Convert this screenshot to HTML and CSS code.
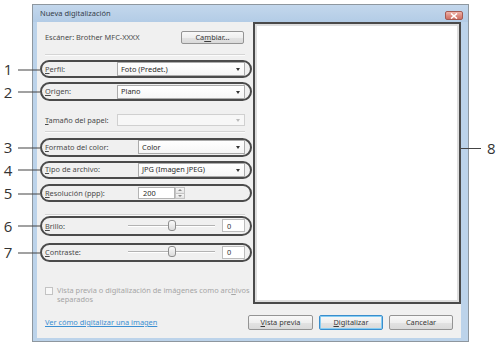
FILE: index.html
```html
<!DOCTYPE html>
<html lang="es">
<head>
<meta charset="utf-8">
<title>Nueva digitalización</title>
<link rel="stylesheet" href="styles.css">
</head>
<body>
<div class="window">
  <div class="titlebar">
    <span class="title">Nueva digitalización</span>
    <span class="close"><svg width="8" height="6" viewBox="0 0 8 6"><path d="M1 0.5 L7 5.5 M7 0.5 L1 5.5" stroke="#fff" stroke-width="1.6" fill="none"/></svg></span>
  </div>
  <div class="client">
    <div class="main">
      <div class="form">
        <div class="scanner"><span>Escáner: Brother MFC-XXXX</span><div class="btn btn-cambiar">Ca<u>m</u>biar...</div></div>
        <div class="sep sep1"></div>
        <div class="row r1"><span class="num">1</span><span class="lab lab-a"><u>P</u>erfil:</span><div class="combo wide">Foto (Predet.)</div></div>
        <div class="row r2"><span class="num">2</span><span class="lab lab-a"><u>O</u>rigen:</span><div class="combo wide">Plano</div></div>
        <div class="row plain r3"><span class="lab lab-a"><u>T</u>amaño del papel:</span><div class="combo wide disabled small"></div></div>
        <div class="sep sep2"></div>
        <div class="row r4"><span class="num">3</span><span class="lab lab-b"><u>F</u>ormato del color:</span><div class="combo narrow">Color</div></div>
        <div class="row r5"><span class="num">4</span><span class="lab lab-b"><u>T</u>ipo de archivo:</span><div class="combo narrow">JPG (Imagen JPEG)</div></div>
        <div class="row r6"><span class="num">5</span><span class="lab lab-b"><u>R</u>esolución (ppp):</span><div class="spin"><span class="spin-val">200</span><span class="spin-btns"><span class="up"></span><span class="down"></span></span></div></div>
        <div class="sep sep3"></div>
        <div class="row tall r7"><span class="num">6</span><span class="lab lab-c"><u>B</u>rillo:</span><div class="track"><span class="thumb"></span></div><div class="val">0</div></div>
        <div class="row tall r8"><span class="num">7</span><span class="lab lab-c"><u>C</u>ontraste:</span><div class="track"><span class="thumb"></span></div><div class="val">0</div></div>
        <div class="check"><span class="box"></span><span class="check-text">Vista previa o digitalización de imágenes como arc<u>h</u>ivos<br>separados</span></div>
      </div>
      <div class="preview">
        <span class="callout8"><span class="line"></span><span class="num8">8</span></span>
      </div>
    </div>
    <div class="footer">
      <span class="link">Ver cómo digitalizar una imagen</span>
      <div class="btn b1"><u>V</u>ista previa</div>
      <div class="btn b2 default"><u>D</u>igitalizar</div>
      <div class="btn b3">Cancelar</div>
    </div>
  </div>
</div>
</body>
</html>
```

FILE: styles.css
```css
* { box-sizing: border-box; margin: 0; padding: 0; }

body {
  width: 500px;
  height: 346px;
  overflow: hidden;
  background: #fff;
  font-family: "Noto Sans", "Open Sans", sans-serif;
  font-size: 7.4px;
  line-height: 1.2;
  color: #4a4a4a;
}

u { text-decoration: underline; text-underline-offset: 1px; }

.window {
  margin: 4px 0 0 32px;
  width: 437px;
  height: 338px;
  border: 1px solid #8e979f;
  background: #bcd3ea;
  display: flex;
  flex-direction: column;
}

.titlebar {
  height: 17px;
  display: flex;
  align-items: center;
  padding-left: 7px;
  background: linear-gradient(#c3d7ec, #b3cce6);
}

.title { color: #36404a; font-size: 7.5px; }

.close {
  margin-left: auto;
  margin-right: 5px;
  align-self: flex-start;
  margin-top: 6px;
  width: 18px;
  height: 9px;
  border: 1px solid #a65a52;
  border-radius: 2px;
  background: linear-gradient(#efb4aa, #dc8a7f 55%, #cf7064);
  display: flex;
  align-items: center;
  justify-content: center;
}

.close svg { display: block; }

.client {
  margin: 0 7px 3px 4px;
  height: 316px;
  background: #f0f0f0;
  display: flex;
  flex-direction: column;
}

.main { display: flex; height: 282px; }

.form { width: 216px; display: flex; flex-direction: column; }

.scanner {
  margin-top: 9px;
  height: 13px;
  display: flex;
  align-items: center;
  justify-content: space-between;
  padding: 0 9px 0 8px;
}

.btn {
  display: flex;
  align-items: center;
  justify-content: center;
  border: 1px solid #949494;
  border-radius: 2px;
  background: linear-gradient(#f8f8f8, #efefef 50%, #e3e3e3 51%, #dadada);
  color: #3a3a3a;
}

.btn-cambiar { width: 63px; height: 13px; }

.sep {
  margin: 0 8px;
  height: 1px;
  background: #d5d5d5;
  box-shadow: 0 1px 0 #fbfbfb;
}
.sep1 { margin-top: 10px; }
.sep2 { margin-top: 2px; }
.sep3 { margin-top: 12px; }

.row {
  position: relative;
  margin-left: 3px;
  width: 212px;
  height: 19px;
  border: 2px solid #4b4b4b;
  border-radius: 10px;
  display: flex;
  align-items: center;
  padding: 0 5px 0 3px;
}
.row.plain { border-color: transparent; }
.row.tall { height: 20px; }

.r1 { margin-top: 5px; }
.r2 { margin-top: 4px; }
.r3 { margin-top: 10px; }
.r4 { margin-top: 6px; }
.r5 { margin-top: 4px; }
.r6 { margin-top: 5px; }
.r7 { margin-top: 1px; }
.r8 { margin-top: 7px; }

.lab { flex: none; }
.lab-a { width: 72px; }
.lab-b { width: 93px; }
.lab-c { width: 83px; }

.num {
  position: absolute;
  left: -39px;
  top: 50%;
  transform: translateY(-50%);
  width: 10px;
  text-align: center;
  font-family: "Open Sans", "Liberation Sans", sans-serif;
  font-size: 15px;
  line-height: 15px;
  color: #333;
}
.num::after {
  content: "";
  position: absolute;
  left: 15px;
  top: 50%;
  width: 22px;
  height: 1px;
  background: #444;
}

.combo {
  position: relative;
  height: 14px;
  border: 1px solid #ababab;
  background: linear-gradient(#ffffff, #f6f6f6);
  display: flex;
  align-items: center;
  padding-left: 3px;
  color: #2a2a2a;
}
.combo::after {
  content: "";
  position: absolute;
  right: 4px;
  top: 5px;
  border-left: 2.5px solid transparent;
  border-right: 2.5px solid transparent;
  border-top: 3px solid #333;
}
.combo.wide { width: 128px; }
.combo.narrow { width: 107px; }
.combo.small { height: 12px; }
.combo.disabled { border-color: #d0d0d0; background: #f7f7f7; }
.combo.disabled::after { border-top-color: #bbb; top: 4px; }

.spin { display: flex; height: 12px; width: 47px; }
.spin-val {
  width: 37px;
  height: 12px;
  border: 1px solid #b4b4b4;
  background: #fff;
  padding-left: 4px;
  color: #2a2a2a;
  display: flex;
  align-items: center;
}
.spin-btns { display: flex; flex-direction: column; width: 10px; }
.spin-btns span {
  position: relative;
  flex: 1;
  border: 1px solid #c4c4c4;
  background: linear-gradient(#f6f6f6, #e4e4e4);
}
.spin-btns .down { border-top: none; }
.spin-btns span::after {
  content: "";
  position: absolute;
  left: 2px;
  top: 1px;
  border-left: 2px solid transparent;
  border-right: 2px solid transparent;
}
.spin-btns .up::after { border-bottom: 2px solid #8a8a8a; }
.spin-btns .down::after { border-top: 2px solid #8a8a8a; }

.track {
  position: relative;
  width: 87px;
  height: 2px;
  border-top: 1px solid #b3b3b3;
  border-bottom: 1px solid #fff;
}
.thumb {
  position: absolute;
  left: 40px;
  top: -6px;
  width: 8px;
  height: 11px;
  border: 1px solid #8e8e8e;
  border-radius: 3px;
  background: linear-gradient(#fafafa, #dcdcdc);
}

.val {
  margin-left: 7px;
  width: 23px;
  height: 13px;
  border: 1px solid #bcbcbc;
  background: #fff;
  padding-left: 4px;
  color: #333;
  display: flex;
  align-items: center;
}

.check {
  margin: 24px 0 0 8px;
  display: flex;
  gap: 4px;
  color: #a5a5a5;
}
.box {
  flex: none;
  margin-top: 1px;
  width: 8px;
  height: 8px;
  border: 1px solid #c3c3c3;
  background: #f8f8f8;
}
.check-text { line-height: 9px; }

.preview {
  position: relative;
  width: 208px;
  border: 2px solid #4a4a4a;
  background: #fff;
  box-shadow: inset 0 0 0 2px #dedede;
}

.callout8 {
  position: absolute;
  left: calc(100% + 2px);
  top: 117px;
  display: flex;
  align-items: center;
  z-index: 2;
}
.callout8 .line { width: 20px; height: 1px; background: #444; }
.num8 {
  margin-left: 6px;
  font-family: "Open Sans", "Liberation Sans", sans-serif;
  font-size: 15px;
  line-height: 15px;
  color: #333;
}

.footer {
  flex: 1;
  display: flex;
  align-items: flex-start;
  padding: 11px 8px 0 8px;
}
.link {
  margin-right: auto;
  line-height: 15px;
  color: #3b8fd2;
  text-decoration: underline;
}
.footer .btn { height: 15px; margin-left: 6px; }
.b1 { width: 65px; }
.b2 { width: 64px; }
.b3 { width: 64px; }
.btn.default {
  border-color: #3a8dcc;
  box-shadow: inset 0 0 0 1px #86cdf3;
}
```
